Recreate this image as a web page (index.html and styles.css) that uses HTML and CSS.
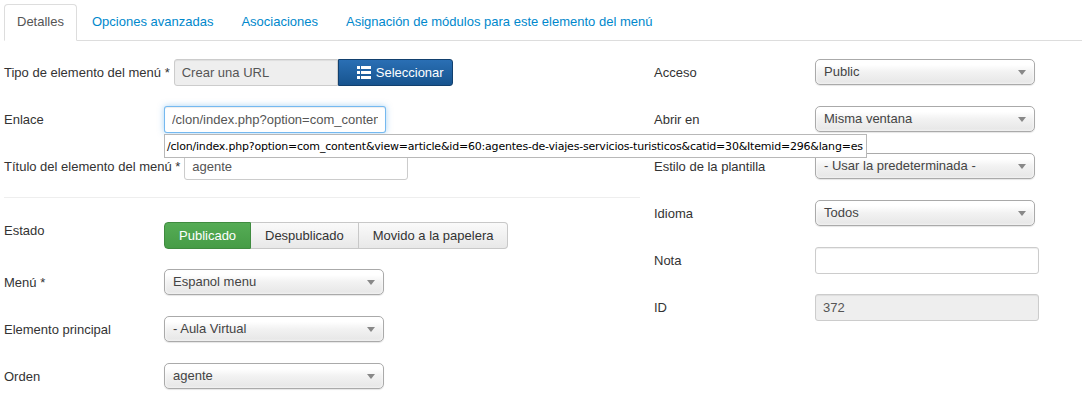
FILE: index.html
```html
<!DOCTYPE html>
<html>
<head>
    <title>Editar elemento del menú</title>
    <link rel="stylesheet" href="styles.css">
</head>
<body>
    <ul class="tabs">
        <li class="active"><a href="#">Detalles</a></li>
        <li><a href="#">Opciones avanzadas</a></li>
        <li><a href="#">Asociaciones</a></li>
        <li><a href="#">Asignación de módulos para este elemento del menú</a></li>
    </ul>

    <div class="form-cols">
        <!-- left column -->
        <div class="col">
            <div class="row">
                <label>Tipo de elemento del menú *</label>
                <div class="append">
                    <input type="text" class="readonly-left" value="Crear una URL" readonly>
                    <button type="button" class="btn-primary">
                        <svg width="14" height="13" viewBox="0 0 14 13"><path fill="#fff" d="M0 0h3v3H0zM4 0h10v3H4zM0 5h3v3H0zM4 5h10v3H4zM0 10h3v3H0zM4 10h10v3H4z"/></svg>
                        Seleccionar
                    </button>
                </div>
            </div>
            <div class="row">
                <label>Enlace</label>
                <div class="control tip-anchor">
                    <input type="text" class="focused" value="/clon/index.php?option=com_content&amp;view=article&amp;id=60">
                    <div class="tooltip">/clon/index.php?option=com_content&amp;view=article&amp;id=60:agentes-de-viajes-servicios-turisticos&amp;catid=30&amp;Itemid=296&amp;lang=es</div>
                </div>
            </div>
            <div class="row">
                <label>Título del elemento del menú *</label>
                <input type="text" value="agente">
            </div>

            <hr class="divider">

            <div class="row">
                <label class="flush">Estado</label>
                <div class="btn-group">
                    <button type="button" class="btn on">Publicado</button>
                    <button type="button" class="btn">Despublicado</button>
                    <button type="button" class="btn">Movido a la papelera</button>
                </div>
            </div>
            <div class="row">
                <label>Menú *</label>
                <div class="select">Espanol menu</div>
            </div>
            <div class="row">
                <label>Elemento principal</label>
                <div class="select">- Aula Virtual</div>
            </div>
            <div class="row">
                <label>Orden</label>
                <div class="select">agente</div>
            </div>
        </div>

        <!-- right column -->
        <div class="col right">
            <div class="row">
                <label>Acceso</label>
                <div class="select">Public</div>
            </div>
            <div class="row">
                <label>Abrir en</label>
                <div class="select">Misma ventana</div>
            </div>
            <div class="row">
                <label>Estilo de la plantilla</label>
                <div class="select">- Usar la predeterminada -</div>
            </div>
            <div class="row">
                <label>Idioma</label>
                <div class="select">Todos</div>
            </div>
            <div class="row">
                <label>Nota</label>
                <input type="text" value="">
            </div>
            <div class="row">
                <label>ID</label>
                <input type="text" class="disabled" value="372" readonly>
            </div>
        </div>
    </div>
</body>
</html>
```

FILE: styles.css
```css
body {
    font-family: "Liberation Sans", Arial, sans-serif;
    font-size: 13px;
    color: #333;
    background: #fff;
    margin: 0;
    padding: 4px 4px 0;
}

/* tabs */
.tabs {
    list-style: none;
    margin: 0;
    padding: 0;
    display: flex;
    border-bottom: 1px solid #ddd;
}
.tabs li { margin: 0 2px -1px 0; }
.tabs a {
    display: block;
    padding: 8px 12px 9px;
    line-height: 18px;
    color: #0088cc;
    text-decoration: none;
    border: 1px solid transparent;
    border-radius: 4px 4px 0 0;
}
.tabs .active a {
    color: #555;
    background: #fff;
    border-color: #ddd #ddd transparent;
}

/* columns */
.form-cols {
    display: grid;
    grid-template-columns: 636px 1fr;
    column-gap: 14px;
    padding-top: 18px;
}

.row {
    display: flex;
    align-items: flex-start;
    margin-bottom: 20px;
    height: 27px;
}
.row label {
    box-sizing: border-box;
    min-width: 160px;
    padding: 5px 4px 0 0;
    line-height: 18px;
}
.row label.flush { padding-top: 0; }
.right .row label { min-width: 161px; }

.divider {
    border: 0;
    border-top: 1px solid #eee;
    margin: -3px 0 24px;
}

input[type="text"] {
    box-sizing: border-box;
    width: 224px;
    height: 27px;
    padding: 4px 7px;
    font-family: "Liberation Sans", Arial, sans-serif;
    font-size: 13px;
    color: #555;
    border: 1px solid #ccc;
    border-radius: 3px;
    box-shadow: inset 0 1px 1px rgba(0,0,0,0.07);
    outline: none;
}
input.focused {
    width: 222px;
    border-color: rgba(82,168,236,0.8);
    box-shadow: inset 0 1px 1px rgba(0,0,0,0.07), 0 0 6px rgba(82,168,236,0.5);
}
input.disabled {
    background: #eee;
    color: #555;
}

/* input with button */
.append { display: flex; }
.append .readonly-left {
    width: 164px;
    background: #eee;
    border-radius: 3px 0 0 3px;
}
.btn-primary {
    display: flex;
    align-items: center;
    gap: 5px;
    width: 115px;
    height: 27px;
    padding: 0 0 0 18px;
    font-family: "Liberation Sans", Arial, sans-serif;
    font-size: 13px;
    color: #fff;
    border: 1px solid #12406e;
    border-radius: 0 3px 3px 0;
    background: linear-gradient(#2a6fb4, #17548f);
}

/* tooltip for the long link */
.tip-anchor { position: relative; }
.tooltip {
    position: absolute;
    left: 0;
    top: 28px;
    z-index: 2;
    white-space: nowrap;
    padding: 5px 3px 4px 2px;
    font-family: "DejaVu Sans", sans-serif;
    font-size: 11px;
    letter-spacing: -0.2px;
    color: #000;
    background: #fff;
    border: 1px solid #b8b8b8;
}

/* state buttons */
.btn-group { display: flex; }
.btn-group .btn {
    height: 27px;
    padding: 0 14px;
    font-family: "Liberation Sans", Arial, sans-serif;
    font-size: 13px;
    color: #333;
    border: 1px solid #c8c8c8;
    border-left-width: 0;
    background: linear-gradient(#fafafa, #e8e8e8);
}
.btn-group .btn:first-child {
    border-left-width: 1px;
    border-radius: 4px 0 0 4px;
}
.btn-group .btn:last-child { border-radius: 0 4px 4px 0; }
.btn-group .btn.on {
    width: 87px;
    color: #fff;
    border-color: #3f8b3f;
    background: linear-gradient(#55ac55, #469c46);
}

/* fake selects */
.select {
    position: relative;
    box-sizing: border-box;
    width: 220px;
    height: 26px;
    padding: 0 8px;
    line-height: 24px;
    color: #444;
    border: 1px solid #aaa;
    border-radius: 5px;
    background: linear-gradient(#fff 20%, #f2f2f2 50%, #e6e6e6);
    box-shadow: 0 0 3px #fff inset, 0 1px 1px rgba(0,0,0,0.1);
}
.select::after {
    content: "";
    position: absolute;
    right: 8px;
    top: 10px;
    border: 4px solid transparent;
    border-top: 5px solid #888;
    border-bottom: 0;
}
```
